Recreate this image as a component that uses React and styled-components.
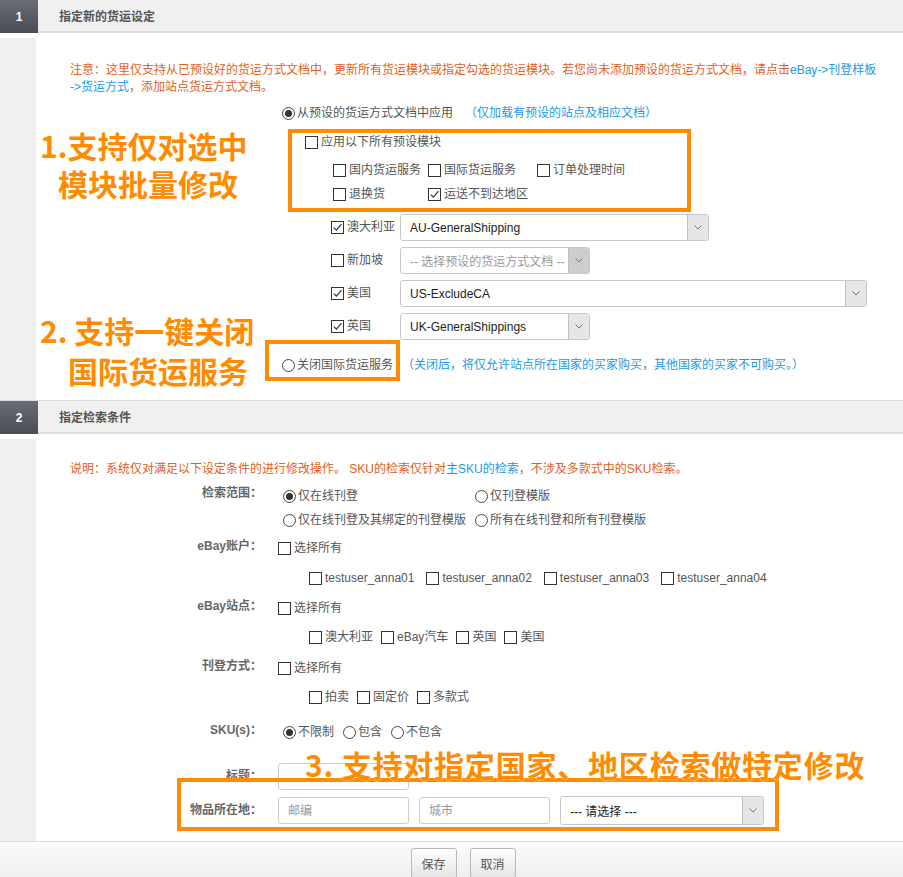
import React from "react";
import styled, { createGlobalStyle } from "styled-components";

const GlobalStyle = createGlobalStyle`
  html, body { margin: 0; padding: 0; background: #fff; }
  body {
    font-family: "Liberation Sans", "Noto Sans CJK SC", sans-serif;
    font-size: 12px;
    color: #555;
  }
`;

const ORANGE = "#ff8c00";
const BLUE = "#1c9be3";

const Page = styled.div`
  position: relative;
  width: 903px;
  height: 877px;
  overflow: hidden;
`;

const SectionHeader = styled.div`
  display: flex;
  align-items: stretch;
  height: 31px;
  background: #f0f0f0;
  border-top: ${(p) => (p.$first ? "none" : "1px solid #dcdcdc")};
  border-bottom: 2px solid #dcdcdc;
`;

const StepNo = styled.div`
  width: 38px;
  margin-bottom: -2px;
  display: flex;
  align-items: center;
  justify-content: center;
  background: linear-gradient(#6a6d76, #4a4c55);
  color: #fff;
  font-weight: bold;
`;

const StepTitle = styled.div`
  display: flex;
  align-items: center;
  margin-left: 21px;
  font-weight: bold;
  color: #555;
`;

const Body = styled.div`
  display: flex;
  margin-top: 5px;
`;

const Strip = styled.div`
  width: 36px;
  flex-shrink: 0;
  background: #f0f0f0;
`;

const Main = styled.div`
  flex: 1;
  padding: ${(p) => p.$pad};
`;

const Note = styled.div`
  margin-left: 34px;
  line-height: 17px;
  color: #e1601d;
  white-space: nowrap;
`;

const Link = styled.span`
  color: ${BLUE};
`;

const Line = styled.div`
  display: flex;
  align-items: center;
  line-height: 17px;
  height: 17px;
  margin-top: ${(p) => p.$mt || 0}px;
  margin-left: ${(p) => p.$ml || 0}px;
`;

const Hint = styled.span`
  color: ${BLUE};
  line-height: 17px;
  margin-left: ${(p) => p.$ml || 0}px;
  margin-bottom: ${(p) => p.$mb || 0}px;
`;

const Option = styled.label`
  display: inline-flex;
  align-items: center;
  gap: ${(p) => (p.$radio ? 2 : 3)}px;
  line-height: 17px;
  margin-right: ${(p) => p.$mr || 0}px;
  white-space: nowrap;
  color: #555;
`;

const Box = styled.span`
  box-sizing: border-box;
  width: 13px;
  height: 13px;
  border: 1px solid #333;
  background: #fff;
  display: inline-flex;
  align-items: center;
  justify-content: center;
  flex-shrink: 0;
`;

const Circle = styled.span`
  box-sizing: border-box;
  width: 13px;
  height: 13px;
  border-radius: 50%;
  border: 1px solid #444;
  background: #fff;
  display: inline-flex;
  align-items: center;
  justify-content: center;
  flex-shrink: 0;

  &::after {
    content: "";
    width: 7px;
    height: 7px;
    border-radius: 50%;
    background: ${(p) => (p.$on ? "#333" : "transparent")};
  }
`;

function Check({ checked, children, mr }) {
  return (
    <Option $mr={mr}>
      <Box>
        {checked && (
          <svg width="11" height="11" viewBox="0 0 11 11">
            <path d="M1.8 5.6 L4.4 8.2 L9.4 2.2" fill="none" stroke="#333" strokeWidth="1.2" />
          </svg>
        )}
      </Box>
      <span>{children}</span>
    </Option>
  );
}

function Radio({ on, children, mr }) {
  return (
    <Option $radio $mr={mr}>
      <Circle $on={on} />
      <span>{children}</span>
    </Option>
  );
}

const Frame = styled.div`
  box-sizing: border-box;
  border: 4px solid ${ORANGE};
  width: ${(p) => (p.$w ? `${p.$w}px` : "auto")};
  margin-left: ${(p) => p.$ml || 0}px;
  margin-top: ${(p) => p.$mt || 0}px;
  padding: ${(p) => p.$pad};
`;

const ModuleGrid = styled.div`
  display: grid;
  grid-template-columns: 95px 109px auto;
  row-gap: 7px;
  margin: 11px 0 0 28px;
`;

const CountryList = styled.div`
  display: flex;
  flex-direction: column;
  gap: 6px;
  margin: 2px 0 0 295px;
`;

const CountryRow = styled.div`
  display: flex;
  align-items: center;
  height: 27px;
`;

const CountryLabel = styled.div`
  width: 69px;
`;

const SelectBox = styled.div`
  box-sizing: border-box;
  width: ${(p) => p.$w}px;
  height: ${(p) => p.$h || 27}px;
  border: 1px solid #c8c8c8;
  border-radius: 3px;
  display: flex;
  align-items: stretch;
  background: #fff;
  color: ${(p) => (p.$disabled ? "#999" : "#222")};
  overflow: hidden;
`;

const SelectText = styled.span`
  flex: 1;
  display: flex;
  align-items: center;
  padding-left: 9px;
  white-space: nowrap;
`;

const SelectArrow = styled.span`
  width: 20px;
  display: flex;
  align-items: center;
  justify-content: center;
  background: ${(p) => (p.$disabled ? "#cdcdcd" : "#e6e6e6")};
  border-left: 1px solid #c0c0c0;
`;

function Select({ w, h, disabled, children }) {
  return (
    <SelectBox $w={w} $h={h} $disabled={disabled}>
      <SelectText>{children}</SelectText>
      <SelectArrow $disabled={disabled}>
        <svg width="8" height="5" viewBox="0 0 8 5">
          <path d="M0.5 0.5 L4 4 L7.5 0.5" fill="none" stroke="#777" strokeWidth="1" />
        </svg>
      </SelectArrow>
    </SelectBox>
  );
}

const CloseRow = styled.div`
  display: flex;
  align-items: flex-end;
  margin-left: 229px;
`;

const FormRow = styled.div`
  position: relative;
  display: grid;
  grid-template-columns: 226px 1fr;
  column-gap: 16px;
  align-items: ${(p) => p.$align || "start"};
  margin-top: ${(p) => p.$mt || 0}px;
`;

const FieldLabel = styled.div`
  text-align: right;
  font-weight: bold;
  color: #666;
  line-height: 17px;
  margin-top: ${(p) => p.$mt || 0}px;
`;

const RadioGrid = styled.div`
  display: grid;
  grid-template-columns: 192px auto;
  row-gap: 7px;
  padding-left: 5px;
`;

const FieldInline = styled.div`
  display: flex;
  align-items: center;
  gap: 10px;
`;

const TextInput = styled.input`
  box-sizing: border-box;
  width: 131px;
  height: 27px;
  border: 1px solid #ccc;
  border-radius: 3px;
  padding: 0 9px;
  font: 12px "Liberation Sans", "Noto Sans CJK SC", sans-serif;
  color: #333;
  background: #fff;
  outline: none;

  &::placeholder {
    color: #999;
  }
`;

const Highlight = styled.span`
  position: absolute;
  top: ${(p) => p.$top}px;
  bottom: ${(p) => p.$bottom}px;
  left: ${(p) => p.$left}px;
  right: ${(p) => p.$right}px;
  border: 4px solid ${ORANGE};
  pointer-events: none;
`;

const Footer = styled.div`
  display: flex;
  justify-content: center;
  gap: 13px;
  padding: 6px 0 0 23px;
  height: 40px;
  border-top: 1px solid #dcdcdc;
  background: linear-gradient(#fbfbfb, #ececec);
`;

const Button = styled.button`
  box-sizing: border-box;
  width: 46px;
  height: 31px;
  border: 1px solid #b8b8b8;
  border-radius: 3px;
  background: linear-gradient(#ffffff, #e4e4e4);
  color: #555;
  font: 12px "Liberation Sans", "Noto Sans CJK SC", sans-serif;
  padding: 0;
`;

const Annotation = styled.div`
  position: absolute;
  top: ${(p) => p.$top}px;
  left: ${(p) => p.$left}px;
  color: ${ORANGE};
  font-family: "Noto Sans CJK SC", sans-serif;
  font-weight: bold;
  font-size: 30px;
  line-height: ${(p) => p.$lh || 38}px;
  letter-spacing: ${(p) => p.$ls || 0}px;
  white-space: nowrap;
  text-shadow: 0 0 2px #fff;
`;

const AnnotLine = styled.div`
  padding-left: ${(p) => p.$indent || 0}px;
`;

export default function App() {
  return (
    <Page>
      <GlobalStyle />

      <SectionHeader $first>
        <StepNo>1</StepNo>
        <StepTitle>指定新的货运设定</StepTitle>
      </SectionHeader>
      <Body>
        <Strip />
        <Main $pad="23.5px 0 19px 0">
          <Note>
            注意：这里仅支持从已预设好的货运方式文档中，更新所有货运模块或指定勾选的货运模块。若您尚未添加预设的货运方式文档，请点击
            <Link>eBay-&gt;刊登样板</Link>
            <br />
            <Link>-&gt;货运方式</Link>，添加站点货运方式文档。
          </Note>

          <Line $mt={9} $ml={246}>
            <Radio on>从预设的货运方式文档中应用</Radio>
            <Hint $ml={12}>（仅加载有预设的站点及相应文档）</Hint>
          </Line>

          <Frame $w={403} $ml={252} $mt={7.5} $pad="0.5px 0 5.5px 13px">
            <Line>
              <Check>应用以下所有预设模块</Check>
            </Line>
            <ModuleGrid>
              <Check>国内货运服务</Check>
              <Check>国际货运服务</Check>
              <Check>订单处理时间</Check>
              <Check>退换货</Check>
              <Check checked>运送不到达地区</Check>
            </ModuleGrid>
          </Frame>

          <CountryList>
            <CountryRow>
              <CountryLabel>
                <Check checked>澳大利亚</Check>
              </CountryLabel>
              <Select w={309}>AU-GeneralShipping</Select>
            </CountryRow>
            <CountryRow>
              <CountryLabel>
                <Check>新加坡</Check>
              </CountryLabel>
              <Select w={190} disabled>
                -- 选择预设的货运方式文档 --
              </Select>
            </CountryRow>
            <CountryRow>
              <CountryLabel>
                <Check checked>美国</Check>
              </CountryLabel>
              <Select w={467}>US-ExcludeCA</Select>
            </CountryRow>
            <CountryRow>
              <CountryLabel>
                <Check checked>英国</Check>
              </CountryLabel>
              <Select w={190}>UK-GeneralShippings</Select>
            </CountryRow>
          </CountryList>

          <CloseRow>
            <Frame $pad="12.5px 3px 3.5px 13px">
              <Line>
                <Radio>关闭国际货运服务</Radio>
              </Line>
            </Frame>
            <Hint $ml={2} $mb={7.5}>
              （关闭后，将仅允许站点所在国家的买家购买，其他国家的买家不可购买。）
            </Hint>
          </CloseRow>
        </Main>
      </Body>

      <SectionHeader>
        <StepNo>2</StepNo>
        <StepTitle>指定检索条件</StepTitle>
      </SectionHeader>
      <Body>
        <Strip />
        <Main $pad="21.5px 0 16px 0">
          <Note>
            说明：系统仅对满足以下设定条件的进行修改操作。 SKU的检索仅针对<Link>主SKU的检索</Link>，不涉及多款式中的SKU检索。
          </Note>

          <FormRow $mt={10}>
            <FieldLabel $mt={-3}>检索范围：</FieldLabel>
            <RadioGrid>
              <Radio on>仅在线刊登</Radio>
              <Radio>仅刊登模版</Radio>
              <Radio>仅在线刊登及其绑定的刊登模版</Radio>
              <Radio>所有在线刊登和所有刊登模版</Radio>
            </RadioGrid>
          </FormRow>

          <FormRow $mt={11}>
            <FieldLabel $mt={-2}>eBay账户：</FieldLabel>
            <div>
              <Line>
                <Check>选择所有</Check>
              </Line>
              <Line $mt={13} $ml={31}>
                <Check mr={12}>testuser_anna01</Check>
                <Check mr={12}>testuser_anna02</Check>
                <Check mr={12}>testuser_anna03</Check>
                <Check>testuser_anna04</Check>
              </Line>
            </div>
          </FormRow>

          <FormRow $mt={13}>
            <FieldLabel $mt={-2}>eBay站点：</FieldLabel>
            <div>
              <Line>
                <Check>选择所有</Check>
              </Line>
              <Line $mt={12} $ml={31}>
                <Check mr={8}>澳大利亚</Check>
                <Check mr={8}>eBay汽车</Check>
                <Check mr={8}>英国</Check>
                <Check>美国</Check>
              </Line>
            </div>
          </FormRow>

          <FormRow $mt={14}>
            <FieldLabel $mt={-2}>刊登方式：</FieldLabel>
            <div>
              <Line>
                <Check>选择所有</Check>
              </Line>
              <Line $mt={12} $ml={31}>
                <Check mr={8}>拍卖</Check>
                <Check mr={8}>固定价</Check>
                <Check>多款式</Check>
              </Line>
            </div>
          </FormRow>

          <FormRow $mt={18}>
            <FieldLabel $mt={-2}>SKU(s)：</FieldLabel>
            <Line $ml={5}>
              <Radio on mr={9}>不限制</Radio>
              <Radio mr={9}>包含</Radio>
              <Radio>不包含</Radio>
            </Line>
          </FormRow>

          <FormRow $mt={22.5} $align="center">
            <FieldLabel>标题：</FieldLabel>
            <FieldInline>
              <TextInput />
            </FieldInline>
          </FormRow>

          <FormRow $mt={6} $align="center">
            <FieldLabel>物品所在地：</FieldLabel>
            <FieldInline>
              <TextInput placeholder="邮编" />
              <TextInput placeholder="城市" />
              <Select w={204} h={29}>--- 请选择 ---</Select>
            </FieldInline>
            <Highlight $top={-18} $bottom={-6} $left={141} $right={124} />
          </FormRow>
        </Main>
      </Body>

      <Footer>
        <Button>保存</Button>
        <Button>取消</Button>
      </Footer>

      <Annotation $top={126} $left={40}>
        <AnnotLine>1.支持仅对选中</AnnotLine>
        <AnnotLine $indent={18}>模块批量修改</AnnotLine>
      </Annotation>
      <Annotation $top={310} $left={40} $lh={40}>
        <AnnotLine>2. 支持一键关闭</AnnotLine>
        <AnnotLine $indent={28}>国际货运服务</AnnotLine>
      </Annotation>
      <Annotation $top={745} $left={305} $ls={0.8}>
        3. 支持对指定国家、地区检索做特定修改
      </Annotation>
    </Page>
  );
}
